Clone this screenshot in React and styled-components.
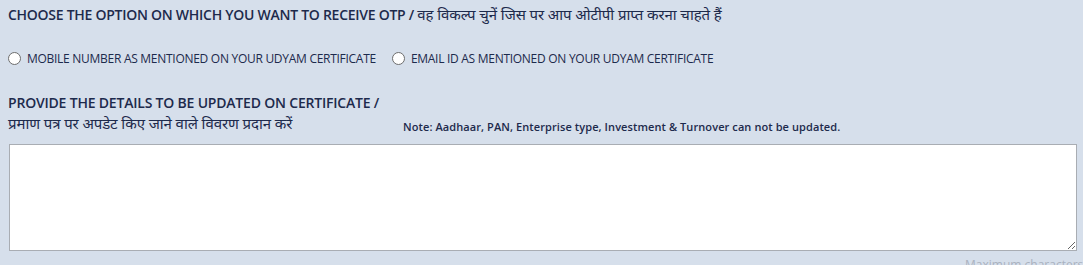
import { useState } from 'react';
import styled, { createGlobalStyle } from 'styled-components';

const GlobalStyle = createGlobalStyle`
  html, body {
    margin: 0;
    padding: 0;
    background: #d6dfeb;
    overflow: hidden;
  }
  body {
    font-family: "Open Sans", "Noto Sans", "Liberation Sans", sans-serif;
    color: #1d2a4c;
  }
`;

const Page = styled.div`
  width: 1083px;
  padding: 4px 6px 0 8px;
  box-sizing: border-box;
  display: flex;
  flex-direction: column;
`;

const Heading = styled.div`
  font-size: 14px;
  line-height: 20px;
  font-weight: 600;
  letter-spacing: -0.27px;
  & > span {
    font-weight: 400;
    font-size: 15px;
    letter-spacing: -0.1px;
  }
`;

const RadioRow = styled.div`
  display: flex;
  align-items: center;
  margin-top: 25px;
  gap: 16px;
`;

const RadioLabel = styled.label`
  display: flex;
  align-items: center;
  gap: 6px;
  font-size: 12px;
  letter-spacing: -0.28px;
  cursor: pointer;
`;

const RadioInput = styled.input`
  appearance: none;
  margin: 0;
  width: 13px;
  height: 13px;
  border-radius: 50%;
  border: 1px solid #6d6d6d;
  background: #fff;
  box-sizing: border-box;
  &:checked {
    border: 4px solid #1a66d2;
  }
`;

const Section = styled.div`
  margin-top: 26px;
  display: flex;
  align-items: flex-end;
`;

const SectionTitle = styled.div`
  font-size: 14px;
  line-height: 20px;
  font-weight: 600;
  letter-spacing: -0.2px;
  width: 395px;
  & > span {
    display: block;
    font-weight: 400;
    font-size: 15px;
    letter-spacing: -0.1px;
  }
`;

const Note = styled.div`
  font-size: 11px;
  font-weight: 600;
  letter-spacing: 0.09px;
  margin-bottom: -1px;
`;

const TextArea = styled.textarea`
  display: block;
  flex-shrink: 0;
  margin: 11px 0 0 1px;
  width: 1068px;
  height: 107px;
  box-sizing: border-box;
  border: 1px solid #a9adb3;
  border-radius: 0;
  background: #fff;
  font: inherit;
  resize: vertical;
  outline: none;
`;

const Counter = styled.div`
  align-self: flex-end;
  margin-top: 5px;
  margin-right: -40px;
  font-size: 12px;
  color: #aab2bf;
  white-space: nowrap;
`;

const OPTIONS = [
  { id: 'mobile', label: 'MOBILE NUMBER AS MENTIONED ON YOUR UDYAM CERTIFICATE' },
  { id: 'email', label: 'EMAIL ID AS MENTIONED ON YOUR UDYAM CERTIFICATE' },
];

const App = () => {
  const [otpMode, setOtpMode] = useState('');
  const [details, setDetails] = useState('');

  return (
    <>
      <GlobalStyle />
      <Page>
        <Heading>
          CHOOSE THE OPTION ON WHICH YOU WANT TO RECEIVE OTP / <span>वह विकल्प चुनें जिस पर आप ओटीपी प्राप्त करना चाहते हैं</span>
        </Heading>
        <RadioRow>
          {OPTIONS.map((opt) => (
            <RadioLabel key={opt.id}>
              <RadioInput
                type="radio"
                name="otp"
                checked={otpMode === opt.id}
                onChange={() => setOtpMode(opt.id)}
              />
              {opt.label}
            </RadioLabel>
          ))}
        </RadioRow>
        <Section>
          <SectionTitle>
            PROVIDE THE DETAILS TO BE UPDATED ON CERTIFICATE /
            <span>प्रमाण पत्र पर अपडेट किए जाने वाले विवरण प्रदान करें</span>
          </SectionTitle>
          <Note>Note: Aadhaar, PAN, Enterprise type, Investment &amp; Turnover can not be updated.</Note>
        </Section>
        <TextArea value={details} onChange={(e) => setDetails(e.target.value)} />
        <Counter>Maximum characters: 1000</Counter>
      </Page>
    </>
  );
};

export default App;
